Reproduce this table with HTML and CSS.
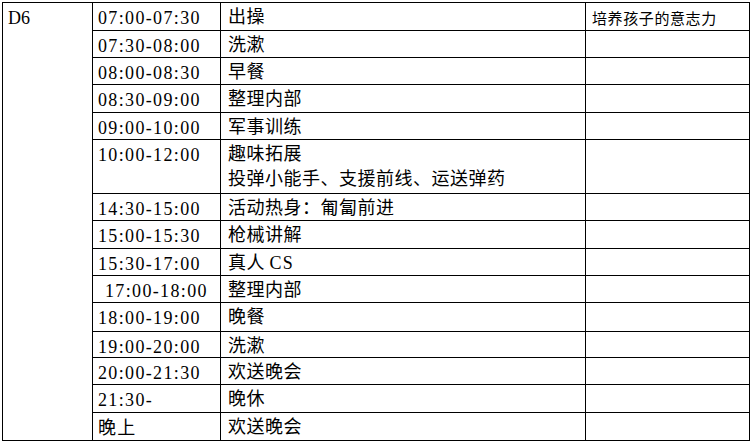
FILE: index.html
```html
<!DOCTYPE html>
<html lang="zh-CN">
<head>
<meta charset="utf-8">
<title>D6 日程</title>
<link rel="stylesheet" href="styles.css">
</head>
<body>
<div class="schedule">
  <div class="cell day">D6</div>

  <div class="cell time">07:00-07:30</div>
  <div class="cell act">出操</div>
  <div class="cell note">培养孩子的意志力</div>

  <div class="cell time">07:30-08:00</div>
  <div class="cell act">洗漱</div>
  <div class="cell note"></div>

  <div class="cell time">08:00-08:30</div>
  <div class="cell act">早餐</div>
  <div class="cell note"></div>

  <div class="cell time">08:30-09:00</div>
  <div class="cell act">整理内部</div>
  <div class="cell note"></div>

  <div class="cell time">09:00-10:00</div>
  <div class="cell act">军事训练</div>
  <div class="cell note"></div>

  <div class="cell time">10:00-12:00</div>
  <div class="cell act">趣味拓展<br>投弹小能手、支援前线、运送弹药</div>
  <div class="cell note"></div>

  <div class="cell time">14:30-15:00</div>
  <div class="cell act">活动热身：匍匐前进</div>
  <div class="cell note"></div>

  <div class="cell time">15:00-15:30</div>
  <div class="cell act">枪械讲解</div>
  <div class="cell note"></div>

  <div class="cell time">15:30-17:00</div>
  <div class="cell act">真人 <span class="latin">CS</span></div>
  <div class="cell note"></div>

  <div class="cell time indent">17:00-18:00</div>
  <div class="cell act">整理内部</div>
  <div class="cell note"></div>

  <div class="cell time">18:00-19:00</div>
  <div class="cell act">晚餐</div>
  <div class="cell note"></div>

  <div class="cell time">19:00-20:00</div>
  <div class="cell act">洗漱</div>
  <div class="cell note"></div>

  <div class="cell time">20:00-21:30</div>
  <div class="cell act">欢送晚会</div>
  <div class="cell note"></div>

  <div class="cell time">21:30-</div>
  <div class="cell act">晚休</div>
  <div class="cell note"></div>

  <div class="cell time">晚上</div>
  <div class="cell act">欢送晚会</div>
  <div class="cell note"></div>
</div>
</body>
</html>
```

FILE: styles.css
```css
html, body {
  margin: 0;
  padding: 0;
  background: #fff;
}

body {
  color: #000;
  font-family: "Liberation Serif", "Noto Sans CJK SC", serif;
}

.schedule {
  display: grid;
  grid-template-columns: 90px 128px 365px 164px;
  grid-template-rows: 28px 27px 27px 28px 27px 54px 27px 28px 27px 27px 29px 26px 27px 28px 28px;
  margin: 2px 0 0 2px;
  width: max-content;
  border-top: 1px solid #000;
  border-left: 1px solid #000;
}

.cell {
  box-sizing: border-box;
  border-right: 1px solid #000;
  border-bottom: 1px solid #000;
  overflow: hidden;
  white-space: nowrap;
}

.day {
  grid-column: 1;
  grid-row: 1 / span 15;
  font-family: "Liberation Serif", serif;
  font-size: 18px;
  line-height: 26px;
  padding: 2px 0 0 5px;
}

.time {
  font-family: "Liberation Serif", "Noto Sans CJK SC", serif;
  font-size: 18px;
  line-height: 26px;
  letter-spacing: 1.35px;
  padding: 2px 0 0 5px;
}

.time.indent {
  padding-left: 12px;
}

.act {
  font-family: "Noto Sans CJK SC", sans-serif;
  font-size: 18px;
  line-height: 25px;
  letter-spacing: 0.5px;
  padding: 0 0 0 7px;
}

.latin {
  font-family: "Liberation Serif", serif;
  letter-spacing: 1.2px;
}

.note {
  font-family: "Noto Sans CJK SC", sans-serif;
  font-size: 15px;
  line-height: 25px;
  letter-spacing: 0.6px;
  padding: 2px 0 0 6px;
}
```
